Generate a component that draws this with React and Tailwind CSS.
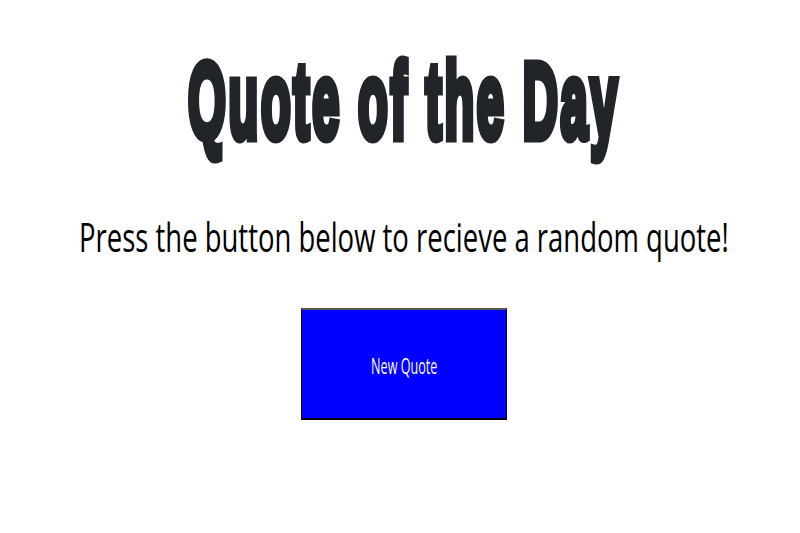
export default function App() {
  return (
    <div className="flex min-h-screen w-full flex-col items-center overflow-hidden bg-white pl-2 pt-[47px]">
      <h1 className="whitespace-nowrap text-[108px] font-bold leading-none tracking-[6px] text-[#212529] scale-x-[0.45] [-webkit-text-stroke:9px_#212529] [font-family:'Liberation_Sans',Arial,sans-serif]">
        Quote of the Day
      </h1>
      <p className="mt-[61px] whitespace-nowrap text-[41px] leading-none text-black scale-x-[0.67] [font-family:'Open_Sans',sans-serif]">
        Press the button below to recieve a random quote!
      </p>
      <button
        type="button"
        className="mt-[51px] flex h-[112px] w-[206px] items-center justify-center border-x border-b-2 border-t-2 border-x-black border-b-black border-t-[#555] bg-[#0000ff]"
      >
        <span className="mt-1 whitespace-nowrap text-[21px] leading-none text-white scale-x-[0.6] [font-family:'Open_Sans',sans-serif]">
          New Quote
        </span>
      </button>
    </div>
  );
}
